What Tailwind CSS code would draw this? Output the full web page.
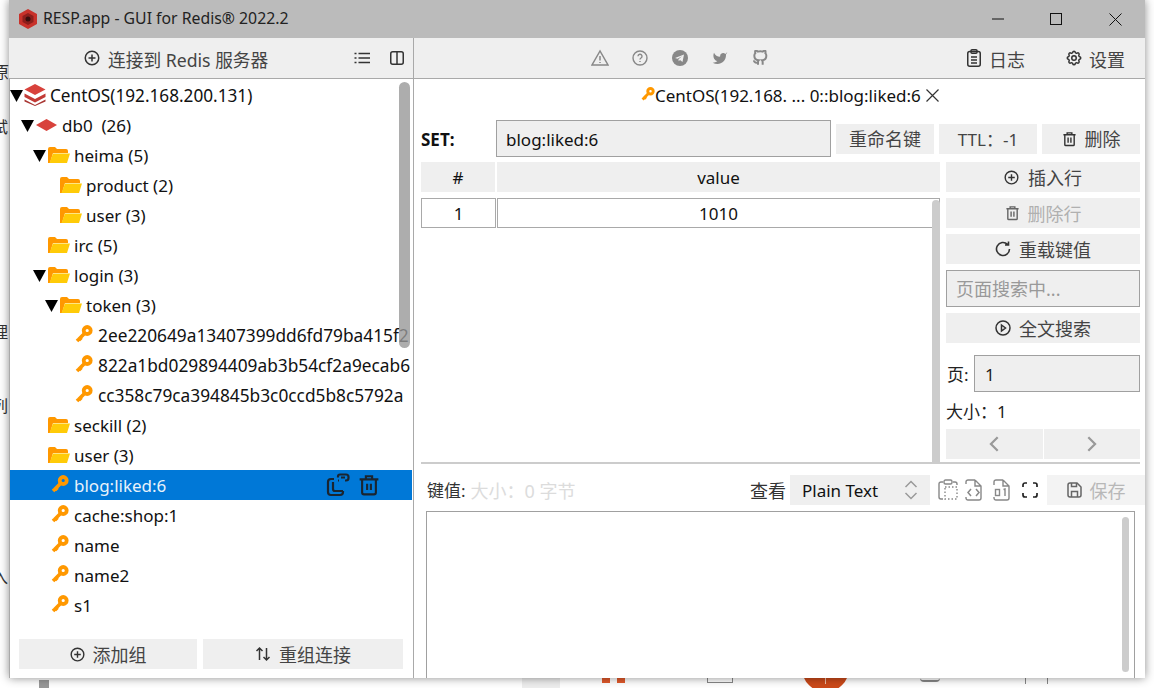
<!DOCTYPE html>
<html lang="zh">
<head>
<meta charset="UTF-8">
<title>RESP.app - GUI for Redis 2022.2</title>
<script src="https://cdn.jsdelivr.net/npm/@tailwindcss/browser@4"></script>
</head>
<body class="relative w-[1154px] h-[688px] overflow-hidden bg-white font-['Noto_Sans','Noto_Sans_CJK_SC',sans-serif] text-[17px] text-[#111]">

<!-- icon set -->
<svg class="hidden">
  <symbol id="arrow" viewBox="0 0 13 13"><path d="M0 1h13L6.5 13z" fill="#000"/></symbol>
  <symbol id="folder" viewBox="0 0 22 18">
    <path d="M0 3Q0 1 2 1H7L9 3H18Q20 3 20 5V7H5L2 17H0z" fill="#ff9800"/>
    <path d="M5 7.500H22L19 17H1.500z" fill="#ffcb08"/>
  </symbol>
  <symbol id="key" viewBox="0 0 18 18" fill="none">
    <circle cx="12.200" cy="5.500" r="3.500" stroke="#ff9800" stroke-width="3.800"/>
    <path d="M9.500 8.500L2 16M3.500 12l3 3" stroke="#ff9800" stroke-width="3.600"/>
  </symbol>
  <symbol id="plus" viewBox="0 0 16 16" fill="none" stroke="currentColor" stroke-width="1.500"><circle cx="8" cy="8" r="6.750"/><path d="M8 4.500v7M4.500 8h7"/></symbol>
  <symbol id="trash" viewBox="0 0 16 16" fill="none" stroke="currentColor" stroke-width="1.500"><path d="M1.500 3.500h13M5.500 3.500V1.500h5v2M3 3.500V14a1 1 0 0 0 1 1h8a1 1 0 0 0 1-1V3.500M6.500 6.500v5.500M9.500 6.500v5.500"/></symbol>
</svg>

<!-- desktop behind the window -->
<div class="absolute left-[-7px] top-[60px] text-[16px] text-[#333]">原</div>
<div class="absolute left-[-8px] top-[115px] text-[16px] text-[#333]">试</div>
<div class="absolute left-[-8px] top-[320px] text-[16px] text-[#333]">理</div>
<div class="absolute left-[-8px] top-[394px] text-[16px] text-[#333]">列</div>
<div class="absolute left-[-8px] top-[565px] text-[16px] text-[#333]">入</div>
<div class="absolute left-[39px] top-[680px] w-[10px] h-[8px] bg-[#999]"></div>
<div class="absolute left-[522px] top-[678px] w-[38px] h-[10px] bg-[#eeeeee]"></div>
<div class="absolute left-[602px] top-[678px] w-[8px] h-[5px] bg-[#e25a2b]"></div>
<div class="absolute left-[617px] top-[678px] w-[8px] h-[5px] bg-[#e25a2b]"></div>
<div class="absolute left-[707px] top-[678px] w-[26px] h-[5px] border-x border-b border-[#888]"></div>
<div class="absolute left-[802px] top-[645px] w-[47px] h-[47px] rounded-full bg-[#cc4a1a]"></div>
<div class="absolute left-[825px] top-[678px] w-[1px] h-[6px] bg-[#f0c0a8]"></div>
<div class="absolute left-[920px] top-[678px] w-[20px] h-[4px] border-b-2 border-[#888] rounded-b-full"></div>
<div class="absolute left-[1025px] top-[678px] w-[1px] h-[6px] bg-[#888]"></div>
<div class="absolute left-[1047px] top-[678px] w-[1px] h-[6px] bg-[#888]"></div>

<!-- app window -->
<div class="absolute left-[9px] top-0 w-[1136px] h-[678px] flex flex-col overflow-hidden bg-white shadow-[0_0_9px_rgba(0,0,0,0.45)]">

  <!-- title bar -->
  <div class="h-[38px] shrink-0 flex items-center bg-[#bbbbbb]">
    <svg class="ml-[10px] w-[18px] h-[20px]" viewBox="0 0 18 20">
      <path d="M9 0l9 5v10l-9 5-9-5V5z" fill="#c8322b"/>
      <path d="M9 4l5.500 3v6L9 16l-5.500-3V7z" fill="#8c1f1c"/>
      <circle cx="9" cy="10" r="2.500" fill="#3a0f0e"/>
    </svg>
    <div class="ml-[6px] text-[15.8px] text-[#222]">RESP.app - GUI for Redis® 2022.2</div>
    <div class="ml-auto flex items-center text-[#111]">
      <svg class="w-[12px] h-[12px]" viewBox="0 0 12 12"><path d="M0 6h12" stroke="currentColor"/></svg>
      <svg class="ml-[46px] w-[12px] h-[12px]" viewBox="0 0 12 12" fill="none"><rect x="0.500" y="0.500" width="11" height="11" stroke="currentColor"/></svg>
      <svg class="ml-[47px] mr-[23px] w-[13px] h-[13px]" viewBox="0 0 13 13"><path d="M0.500 0.500l12 12M12.500 0.500l-12 12" stroke="currentColor"/></svg>
    </div>
  </div>

  <!-- top toolbar -->
  <div class="h-[41px] shrink-0 flex bg-[#efefef] border-b border-[#a9a9a9] text-[#444] [&_span]:pt-[4px]">
    <div class="w-[405px] shrink-0 flex items-center border-r border-[#a9a9a9]">
      <svg class="ml-[75px] w-[16px] h-[16px] text-[#333]"><use href="#plus"/></svg>
      <span class="ml-[8px] text-[17.7px]">连接到 Redis 服务器</span>
      <svg class="ml-[86px] w-[16px] h-[16px] text-[#333]" viewBox="0 0 16 16" fill="none" stroke="currentColor" stroke-width="1.500"><path d="M4.500 3.500H16M4.500 8H16M4.500 12.500H16M0.500 3.500h2M0.500 8h2M0.500 12.500h2"/></svg>
      <svg class="ml-[20px] w-[14px] h-[14px] text-[#333]" viewBox="0 0 14 14" fill="none" stroke="currentColor" stroke-width="1.500"><rect x="0.750" y="0.750" width="12.500" height="12.500" rx="2"/><path d="M7 1v12"/></svg>
    </div>
    <div class="flex-1 flex items-center text-[#888]">
      <svg class="ml-[177px] w-[18px] h-[18px]" viewBox="0 0 18 18" fill="none" stroke="currentColor" stroke-width="1.500"><path d="M9 2L1 16h16zM9 7v4.500M9 13v1"/></svg>
      <svg class="ml-[23px] w-[16px] h-[16px]" viewBox="0 0 16 16" fill="none" stroke="currentColor" stroke-width="1.400"><circle cx="8" cy="8" r="7"/><path d="M6 6.300a2 2 0 1 1 3 1.700c-.7.400-1 .800-1 1.500M8 11v1"/></svg>
      <svg class="ml-[24px] w-[16px] h-[16px]" viewBox="0 0 16 16"><circle cx="8" cy="8" r="8" fill="currentColor"/><path d="M3 8l9-3.500L10.500 12 8 10l-1.300 1.300L6.500 9.200 10 6.200 5.500 8.700z" fill="#efefef"/></svg>
      <svg class="ml-[24px] w-[16px] h-[16px]" viewBox="0 0 24 24"><path d="M23 3a10.900 10.900 0 0 1-3 3 4.480 4.480 0 0 0-7.860 3v1A10.660 10.660 0 0 1 3 4s-4 9 5 13a11.640 11.640 0 0 1-7 2c9 5 20 0 20-11.500a4.500 4.500 0 0 0-.08-.83A7.720 7.720 0 0 0 23 3z" fill="currentColor"/></svg>
      <svg class="ml-[24px] w-[16px] h-[16px]" viewBox="0 0 24 24" fill="none" stroke="currentColor" stroke-width="3"><path d="M9 19c-5 1.500-5-2.500-7-3m14 6v-3.870a3.370 3.370 0 0 0-.94-2.610c3.140-.35 6.440-1.540 6.440-7A5.440 5.440 0 0 0 20 4.770 5.070 5.070 0 0 0 19.910 1S18.730.65 16 2.480a13.380 13.380 0 0 0-7 0C6.270.65 5.090 1 5.090 1A5.070 5.070 0 0 0 5 4.770a5.440 5.440 0 0 0-1.500 3.780c0 5.420 3.300 6.610 6.440 7A3.370 3.370 0 0 0 9 18.130V22"/></svg>
      <div class="ml-auto flex items-center text-[#444]">
        <svg class="w-[14px] h-[18px] text-[#333]" viewBox="0 0 14 18" fill="none" stroke="currentColor" stroke-width="1.500"><rect x="0.750" y="2.500" width="12.500" height="14.750" rx="2"/><rect x="4" y="0.750" width="6" height="3.500" rx="1"/><path d="M4 8h6M4 11h6M4 14h6"/></svg>
        <span class="ml-[8px] text-[18px]">日志</span>
        <svg class="ml-[40px] w-[18px] h-[18px] text-[#333]" viewBox="0 0 24 24" fill="none" stroke="currentColor" stroke-width="2"><path d="M10.325 4.317c.426-1.756 2.924-1.756 3.350 0a1.724 1.724 0 0 0 2.573 1.066c1.543-.94 3.310.826 2.370 2.370a1.724 1.724 0 0 0 1.065 2.572c1.756.426 1.756 2.924 0 3.350a1.724 1.724 0 0 0-1.066 2.573c.94 1.543-.826 3.310-2.370 2.370a1.724 1.724 0 0 0-2.572 1.065c-.426 1.756-2.924 1.756-3.350 0a1.724 1.724 0 0 0-2.573-1.066c-1.543.94-3.310-.826-2.370-2.370a1.724 1.724 0 0 0-1.065-2.572c-1.756-.426-1.756-2.924 0-3.350a1.724 1.724 0 0 0 1.066-2.573c-.94-1.543.826-3.310 2.370-2.370 1 .608 2.296.07 2.572-1.065z"/><circle cx="12" cy="12" r="3"/></svg>
        <span class="ml-[6px] mr-[20px] text-[18px]">设置</span>
      </div>
    </div>
  </div>

  <div class="flex-1 flex min-h-0">

    <!-- connection tree -->
    <div class="relative w-[405px] shrink-0 flex flex-col border-l border-r border-[#a9a9a9] bg-white [&_span]:pt-[2px]">
      <div class="w-[402px] h-[559px] pt-[1px] overflow-hidden">
        <div class="h-[30px] flex items-center whitespace-pre">
          <svg class="w-[13px] h-[13px]"><use href="#arrow"/></svg>
          <svg class="ml-[1px] w-[22px] h-[22px]" viewBox="0 0 22 22">
            <path d="M11 0l10.500 5.500L11 11 .5 5.500z" fill="#d8423c"/>
            <path d="M.5 9.500L11 15l10.500-5.500v3.500L11 18.500.5 13z" fill="#c23a36"/>
            <path d="M.5 15.500L11 21l10.500-5.500v2L11 22 .5 17.500z" fill="#a83532"/>
          </svg>
          <span class="ml-[4px] text-[17.2px]">CentOS(192.168.200.131)</span>
        </div>
        <div class="h-[30px] flex items-center whitespace-pre pl-[11px]">
          <svg class="w-[13px] h-[13px]"><use href="#arrow"/></svg>
          <svg class="ml-[2px] w-[21px] h-[12px]" viewBox="0 0 21 12"><path d="M10.500 0L21 6l-10.500 6L0 6z" fill="#d8423c"/></svg>
          <span class="ml-[5px]">db0  (26)</span>
        </div>
        <div class="h-[30px] flex items-center whitespace-pre pl-[23px]">
          <svg class="w-[13px] h-[13px]"><use href="#arrow"/></svg>
          <svg class="ml-[2px] w-[22px] h-[18px]"><use href="#folder"/></svg>
          <span class="ml-[4px]">heima (5)</span>
        </div>
        <div class="h-[30px] flex items-center whitespace-pre pl-[50px]">
          <svg class="w-[22px] h-[18px]"><use href="#folder"/></svg>
          <span class="ml-[4px]">product (2)</span>
        </div>
        <div class="h-[30px] flex items-center whitespace-pre pl-[50px]">
          <svg class="w-[22px] h-[18px]"><use href="#folder"/></svg>
          <span class="ml-[4px]">user (3)</span>
        </div>
        <div class="h-[30px] flex items-center whitespace-pre pl-[38px]">
          <svg class="w-[22px] h-[18px]"><use href="#folder"/></svg>
          <span class="ml-[4px]">irc (5)</span>
        </div>
        <div class="h-[30px] flex items-center whitespace-pre pl-[23px]">
          <svg class="w-[13px] h-[13px]"><use href="#arrow"/></svg>
          <svg class="ml-[2px] w-[22px] h-[18px]"><use href="#folder"/></svg>
          <span class="ml-[4px]">login (3)</span>
        </div>
        <div class="h-[30px] flex items-center whitespace-pre pl-[35px]">
          <svg class="w-[13px] h-[13px]"><use href="#arrow"/></svg>
          <svg class="ml-[2px] w-[22px] h-[18px]"><use href="#folder"/></svg>
          <span class="ml-[4px]">token (3)</span>
        </div>
        <div class="h-[30px] flex items-center whitespace-pre pl-[65px]">
          <svg class="w-[18px] h-[18px] shrink-0 -mt-[3px]"><use href="#key"/></svg>
          <span class="ml-[5px] text-[17.3px]">2ee220649a13407399dd6fd79ba415f2</span>
        </div>
        <div class="h-[30px] flex items-center whitespace-pre pl-[65px]">
          <svg class="w-[18px] h-[18px] shrink-0 -mt-[3px]"><use href="#key"/></svg>
          <span class="ml-[5px] text-[17.3px]">822a1bd029894409ab3b54cf2a9ecab6</span>
        </div>
        <div class="h-[30px] flex items-center whitespace-pre pl-[65px]">
          <svg class="w-[18px] h-[18px] shrink-0 -mt-[3px]"><use href="#key"/></svg>
          <span class="ml-[5px] text-[17.3px]">cc358c79ca394845b3c0ccd5b8c5792a</span>
        </div>
        <div class="h-[30px] flex items-center whitespace-pre pl-[38px]">
          <svg class="w-[22px] h-[18px]"><use href="#folder"/></svg>
          <span class="ml-[4px]">seckill (2)</span>
        </div>
        <div class="h-[30px] flex items-center whitespace-pre pl-[38px]">
          <svg class="w-[22px] h-[18px]"><use href="#folder"/></svg>
          <span class="ml-[4px]">user (3)</span>
        </div>
        <div class="h-[30px] flex items-center whitespace-pre pl-[41px] bg-[#0078d7] text-[#e8f2fb]">
          <svg class="w-[18px] h-[18px] shrink-0 -mt-[3px]"><use href="#key"/></svg>
          <span class="ml-[5px]">blog:liked:6</span>
          <svg class="ml-auto w-[24px] h-[24px] text-[#1a2530]" viewBox="0 0 24 24" fill="none" stroke="currentColor" stroke-width="2.200"><path d="M8 6H5a3 3 0 0 0-3 3v10a3 3 0 0 0 3 3h9a3 3 0 0 0 3-3v-1"/><path d="M7 9v7a2 2 0 0 0 2 2h8"/><path d="M12 4.500V3.500a2 2 0 0 1 2-2h6a2.500 2.500 0 0 1 2.500 2.500v1a2.500 2.500 0 0 1-2.500 2.500h-1M13 7.500h-1M15 4.500h4"/></svg>
          <svg class="ml-[9px] mr-[33px] w-[20px] h-[22px] text-[#1a2530]" viewBox="0 0 16 17" fill="none" stroke="currentColor" stroke-width="1.700"><path d="M0.500 4h15M5.500 4V1.500h5V4M2.500 4v10.500a1.500 1.500 0 0 0 1.500 1.500h8a1.500 1.500 0 0 0 1.500-1.500V4M6.500 7.500v5M9.500 7.500v5"/></svg>
        </div>
        <div class="h-[30px] flex items-center whitespace-pre pl-[41px]">
          <svg class="w-[18px] h-[18px] shrink-0 -mt-[3px]"><use href="#key"/></svg>
          <span class="ml-[5px]">cache:shop:1</span>
        </div>
        <div class="h-[30px] flex items-center whitespace-pre pl-[41px]">
          <svg class="w-[18px] h-[18px] shrink-0 -mt-[3px]"><use href="#key"/></svg>
          <span class="ml-[5px]">name</span>
        </div>
        <div class="h-[30px] flex items-center whitespace-pre pl-[41px]">
          <svg class="w-[18px] h-[18px] shrink-0 -mt-[3px]"><use href="#key"/></svg>
          <span class="ml-[5px]">name2</span>
        </div>
        <div class="h-[30px] flex items-center whitespace-pre pl-[41px]">
          <svg class="w-[18px] h-[18px] shrink-0 -mt-[3px]"><use href="#key"/></svg>
          <span class="ml-[5px]">s1</span>
        </div>
      </div>
      <div class="absolute left-[389px] top-[3px] w-[11px] h-[266px] rounded-full bg-[#999]/80"></div>
      <div class="flex gap-[6px] pl-[9px] mt-[1px] text-[#444]">
        <div class="w-[178px] h-[30px] flex items-center justify-center bg-[#efefef]">
          <svg class="w-[15px] h-[15px] text-[#333]"><use href="#plus"/></svg>
          <span class="ml-[8px] text-[18px]">添加组</span>
        </div>
        <div class="w-[200px] h-[30px] flex items-center justify-center bg-[#efefef]">
          <svg class="w-[16px] h-[16px] text-[#333]" viewBox="0 0 16 16" fill="none" stroke="currentColor" stroke-width="1.500"><path d="M4.500 14V2M1.500 5l3-3 3 3M11.500 2v12M8.500 11l3 3 3-3"/></svg>
          <span class="ml-[8px] text-[18px]">重组连接</span>
        </div>
      </div>
    </div>

    <!-- key view -->
    <div class="flex-1 min-w-0 flex flex-col pl-[7px] bg-white [&_span]:pt-[2px]">
      <div class="h-[41px] shrink-0 pt-[5px]">
        <div class="h-[22px] flex items-center -ml-[7px] pl-[227px] whitespace-pre">
          <svg class="w-[14px] h-[14px] -mt-[3px] shrink-0"><use href="#key"/></svg>
          <span>CentOS(192.168. ... 0::blog:liked:6</span>
          <svg class="ml-[5px] w-[13px] h-[13px] text-[#333]" viewBox="0 0 13 13"><path d="M0.500 0.500l12 12M12.500 0.500l-12 12" stroke="currentColor" stroke-width="1.200"/></svg>
        </div>
      </div>

      <div class="h-[37px] shrink-0 flex items-center">
        <span class="w-[75px] font-bold">SET:</span>
        <div class="w-[335px] h-[37px] flex items-center pl-[9px] bg-[#efefef] border border-[#a0a0a0]"><span>blog:liked:6</span></div>
        <div class="ml-[5px] w-[98px] h-[30px] flex items-center justify-center bg-[#efefef] text-[#444]"><span class="text-[18px]">重命名键</span></div>
        <div class="ml-[5px] w-[98px] h-[30px] flex items-center justify-center bg-[#efefef] text-[#444]"><span>TTL：-1</span></div>
        <div class="ml-[5px] w-[98px] h-[30px] flex items-center justify-center bg-[#efefef] text-[#444]">
          <svg class="w-[15px] h-[16px] text-[#333]"><use href="#trash"/></svg>
          <span class="ml-[8px] text-[18px]">删除</span>
        </div>
      </div>

      <div class="mt-[5px] h-[300px] shrink-0 flex gap-[6px]">
        <div class="relative w-[519px]">
          <div class="flex gap-[2px] h-[30px]">
            <div class="w-[74px] flex items-center justify-center bg-[#efefef]"><span>#</span></div>
            <div class="flex-1 flex items-center justify-center bg-[#efefef]"><span>value</span></div>
          </div>
          <div class="mt-[6px] flex gap-[1px] h-[30px]">
            <div class="w-[75px] flex items-center justify-center border border-[#a9a9a9]"><span>1</span></div>
            <div class="flex-1 flex items-center justify-center border border-[#a9a9a9]"><span>1010</span></div>
          </div>
          <div class="absolute left-[511px] top-[38px] w-[8px] h-[262px] rounded-t-full bg-[#cccccc]"></div>
        </div>
        <div class="w-[194px] flex flex-col text-[#444]">
          <div class="h-[30px] flex items-center justify-center bg-[#efefef]">
            <svg class="w-[15px] h-[15px] text-[#333]"><use href="#plus"/></svg>
            <span class="ml-[9px] text-[18px]">插入行</span>
          </div>
          <div class="mt-[6px] h-[30px] flex items-center justify-center bg-[#efefef] text-[#b0b0b0]">
            <svg class="w-[15px] h-[16px] text-[#666]"><use href="#trash"/></svg>
            <span class="ml-[8px] text-[18px]">删除行</span>
          </div>
          <div class="mt-[6px] h-[30px] flex items-center justify-center bg-[#efefef]">
            <svg class="w-[16px] h-[16px] text-[#333]" viewBox="0 0 16 16" fill="none" stroke="currentColor" stroke-width="1.600"><path d="M14.500 8a6.500 6.500 0 1 1-2-4.700M13.500 0.500v3.500H10"/></svg>
            <span class="ml-[8px] text-[18px]">重载键值</span>
          </div>
          <div class="mt-[6px] h-[37px] flex items-center pl-[9px] bg-[#efefef] border border-[#a0a0a0] text-[#999]"><span class="text-[18px]">页面搜索中...</span></div>
          <div class="mt-[6px] h-[30px] flex items-center justify-center bg-[#efefef]">
            <svg class="w-[16px] h-[16px] text-[#333]" viewBox="0 0 16 16" fill="none" stroke="currentColor" stroke-width="1.500"><circle cx="8" cy="8" r="7"/><path d="M6.500 5l4 3-4 3z"/></svg>
            <span class="ml-[8px] text-[18px]">全文搜索</span>
          </div>
          <div class="mt-[12px] h-[37px] flex items-center text-[#222]">
            <span class="w-[28px] pl-[1px]">页:</span>
            <div class="flex-1 h-[37px] flex items-center pl-[10px] bg-[#efefef] border border-[#a0a0a0]"><span>1</span></div>
          </div>
          <div class="h-[37px] flex items-center text-[#222]"><span>大小：1</span></div>
          <div class="h-[30px] flex gap-[1px]">
            <div class="flex-1 flex items-center justify-center bg-[#efefef]">
              <svg class="w-[10px] h-[16px] text-[#999]" viewBox="0 0 8 13" fill="none" stroke="currentColor" stroke-width="1.800"><path d="M7 1L1.500 6.500 7 12"/></svg>
            </div>
            <div class="flex-1 flex items-center justify-center bg-[#efefef]">
              <svg class="w-[10px] h-[16px] text-[#999]" viewBox="0 0 8 13" fill="none" stroke="currentColor" stroke-width="1.800"><path d="M1 1l5.500 5.500L1 12"/></svg>
            </div>
          </div>
        </div>
      </div>

      <div class="w-[719px] h-[2px] shrink-0 bg-[#cccccc]"></div>

      <div class="mt-[11px] h-[30px] shrink-0 flex items-center pl-[6px]">
        <span class="text-[#333]">键值:</span>
        <span class="ml-[5px] text-[#dcdcdc] text-[18px]">大小：0 字节</span>
        <span class="ml-auto text-[#333] text-[18px]">查看</span>
        <div class="ml-[4px] w-[140px] h-[30px] flex items-center pl-[12px] bg-[#efefef]">
          <span>Plain Text</span>
          <svg class="ml-auto mr-[12px] w-[14px] h-[20px] text-[#999]" viewBox="0 0 14 20" fill="none" stroke="currentColor" stroke-width="1.500"><path d="M1.500 7L7 1.500 12.500 7M1.500 13L7 18.500 12.500 13"/></svg>
        </div>
        <svg class="ml-[8px] w-[20px] h-[22px] text-[#888]" viewBox="0 0 20 22" fill="none" stroke="currentColor" stroke-width="1.400"><path d="M5 3H3a2 2 0 0 0-2 2v13a2 2 0 0 0 2 2h2M15 3h2a2 2 0 0 1 2 2v1"/><rect x="6" y="1" width="8" height="4" rx="1.500"/><path d="M7 8h12v12H7z" stroke-dasharray="1.500 2"/></svg>
        <svg class="ml-[7px] w-[17px] h-[22px] text-[#888]" viewBox="0 0 17 22" fill="none" stroke="currentColor" stroke-width="1.400"><path d="M10 1H3a2 2 0 0 0-2 2v2M10 1l6 6v12a2 2 0 0 1-2 2H3a2 2 0 0 1-2-2v-1M10 1v6h6"/><path d="M6 10l-3 3.500L6 17M11 10l3 3.500-3 3.500" stroke-width="1.500"/></svg>
        <svg class="ml-[11px] w-[17px] h-[22px] text-[#888]" viewBox="0 0 17 22" fill="none" stroke="currentColor" stroke-width="1.400"><path d="M10 1H3a2 2 0 0 0-2 2v3M10 1l6 6v12a2 2 0 0 1-2 2H3a2 2 0 0 1-2-2v-1M10 1v6h6"/><rect x="2.500" y="10.500" width="4" height="6"/><path d="M10.500 10.500l1.500-.5v7"/></svg>
        <svg class="ml-[12px] w-[16px] h-[16px] text-[#222]" viewBox="0 0 16 16" fill="none" stroke="currentColor" stroke-width="1.700"><path d="M1 5V3a2 2 0 0 1 2-2h2M11 1h2a2 2 0 0 1 2 2v2M15 11v2a2 2 0 0 1-2 2h-2M5 15H3a2 2 0 0 1-2-2v-2"/></svg>
        <div class="ml-[9px] w-[98px] h-[30px] flex items-center justify-center bg-[#f3f3f3] text-[#b8b8b8]">
          <svg class="w-[15px] h-[16px] text-[#666]" viewBox="0 0 15 16" fill="none" stroke="currentColor" stroke-width="1.500"><path d="M1 3a2 2 0 0 1 2-2h7l4 4v8a2 2 0 0 1-2 2H3a2 2 0 0 1-2-2z"/><path d="M4.500 15V9.500h6V15M4.500 1v3.500h5V1"/></svg>
          <span class="ml-[8px] text-[18px]">保存</span>
        </div>
      </div>

      <div class="relative mt-[6px] ml-[5px] w-[709px] h-[190px] shrink-0 border border-[#a0a0a0]">
        <div class="absolute left-[695px] top-[5px] w-[7px] h-[155px] rounded-full bg-[#cccccc]"></div>
      </div>
    </div>
  </div>
</div>
</body>
</html>
